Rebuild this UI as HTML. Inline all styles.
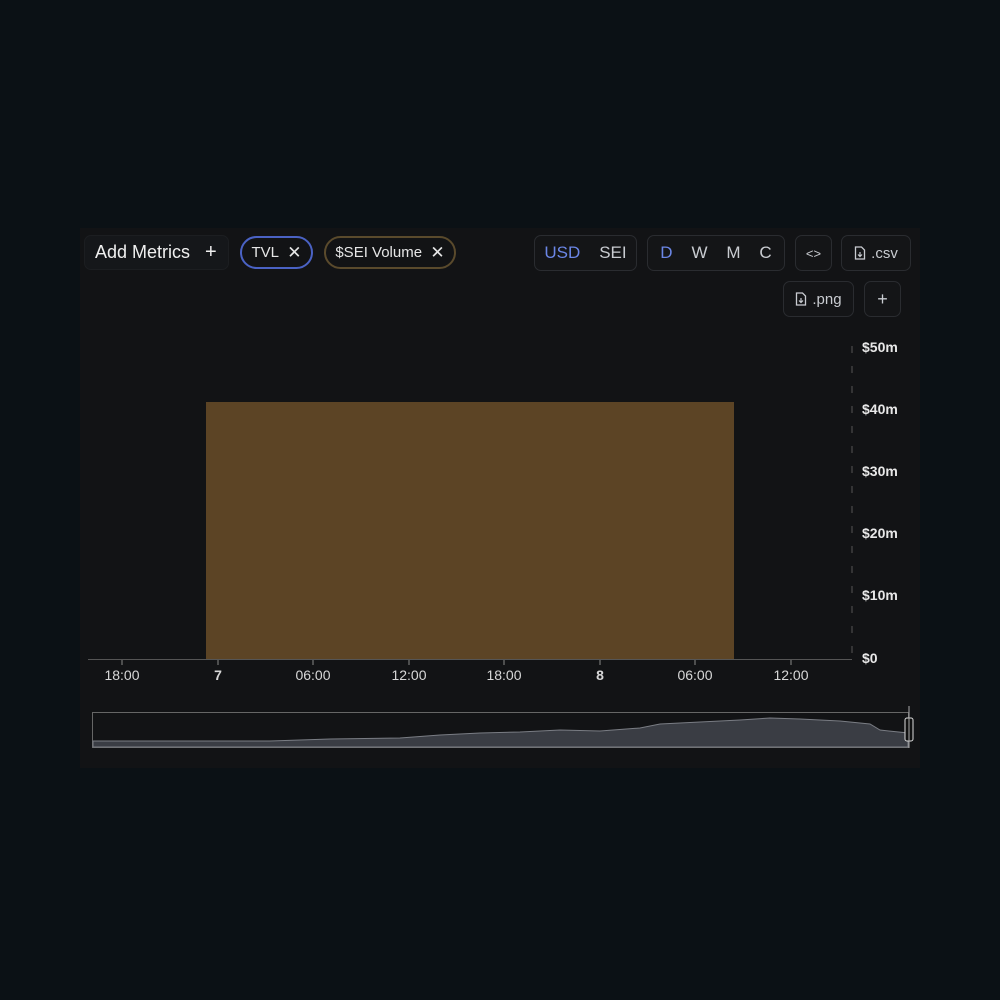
<!DOCTYPE html>
<html><head><style>
body{margin:0;width:1000px;height:1000px;background:#0b1115;position:relative;font-family:"Liberation Sans",sans-serif;overflow:hidden}
.panel{position:absolute;left:80px;top:228px;width:840px;height:540px;background:#121315}
.btn{position:absolute;border:1px solid #2a2c30;border-radius:7px;color:#c9ccd1;font-size:15px;display:flex;align-items:center;justify-content:center;box-sizing:border-box;background:#141517}
.pill{position:absolute;border-radius:17px;color:#e6e6e6;font-size:15px;display:flex;align-items:center;justify-content:center;box-sizing:border-box}
.yl{position:absolute;left:862px;color:#e8e8e8;font-size:14px;font-weight:bold}
.xl{position:absolute;top:667px;color:#d8d8d8;font-size:14px;width:60px;text-align:center}
</style></head><body>
<div class="panel"></div>
<div class="btn" style="left:84px;top:235px;width:145px;height:35px;font-size:18px;color:#f0f0f0;border-color:#1c1e21;background:#15171a;justify-content:flex-start;padding-left:10px">Add Metrics&nbsp;&nbsp;&nbsp;<span style="font-size:20px;font-weight:300">+</span></div>
<div class="pill" style="left:240px;top:236px;width:73px;height:33px;border:2px solid #4a62c4">TVL&nbsp;&nbsp;<span style="font-size:17px">✕</span></div>
<div class="pill" style="left:324px;top:236px;width:132px;height:33px;border:2px solid #5a4a2c">$SEI Volume&nbsp;&nbsp;<span style="font-size:17px">✕</span></div>
<div class="btn" style="left:534px;top:235px;width:103px;height:36px;font-size:17px"><span style="color:#6b86e6">USD</span>&nbsp;&nbsp;&nbsp;&nbsp;<span>SEI</span></div>
<div class="btn" style="left:647px;top:235px;width:138px;height:36px;font-size:17px;word-spacing:0"><span style="color:#6b86e6">D</span>&nbsp;&nbsp;&nbsp;&nbsp;W&nbsp;&nbsp;&nbsp;&nbsp;M&nbsp;&nbsp;&nbsp;&nbsp;C</div>
<div class="btn" style="left:795px;top:235px;width:37px;height:36px;font-size:13px">&lt;&gt;</div>
<div class="btn" style="left:841px;top:235px;width:70px;height:36px"><svg width="12" height="14" viewBox="0 0 12 14" style="margin-right:5px"><path d="M1.5 1h6l3 3v9h-9z" fill="none" stroke="#c9ccd1" stroke-width="1.3"/><path d="M6 6v4M4 8.5l2 2 2-2" fill="none" stroke="#c9ccd1" stroke-width="1.2"/></svg>.csv</div>
<div class="btn" style="left:783px;top:281px;width:71px;height:36px"><svg width="12" height="14" viewBox="0 0 12 14" style="margin-right:5px"><path d="M1.5 1h6l3 3v9h-9z" fill="none" stroke="#c9ccd1" stroke-width="1.3"/><path d="M6 6v4M4 8.5l2 2 2-2" fill="none" stroke="#c9ccd1" stroke-width="1.2"/></svg>.png</div>
<div class="btn" style="left:864px;top:281px;width:37px;height:36px;font-size:18px">+</div>
<svg style="position:absolute;left:0;top:0" width="1000" height="1000">
<rect x="206" y="402" width="528" height="257" fill="#5c4425"/>
<line x1="852" y1="346" x2="852" y2="657" stroke="#555" stroke-dasharray="7,13"/>
<line x1="88" y1="659.5" x2="852" y2="659.5" stroke="#555"/>
<g stroke="#888">
<line x1="122" y1="660" x2="122" y2="665"/><line x1="218" y1="660" x2="218" y2="665"/><line x1="313" y1="660" x2="313" y2="665"/><line x1="409" y1="660" x2="409" y2="665"/><line x1="504" y1="660" x2="504" y2="665"/><line x1="600" y1="660" x2="600" y2="665"/><line x1="695" y1="660" x2="695" y2="665"/><line x1="791" y1="660" x2="791" y2="665"/>
</g>
<rect x="92.5" y="712.5" width="816" height="35" fill="none" stroke="#666"/>
<path d="M93 741 L270 741 L330 739 L400 738 L440 735 L480 733 L520 732 L560 730 L600 731 L640 728 L660 724 L700 722 L740 720 L770 718 L800 719 L840 721 L870 724 L880 730 L908 733 L908 747 L93 747Z" fill="#3a3d44" stroke="#7a7d84" stroke-width="1"/>
<rect x="905" y="718" width="8" height="23" rx="2" fill="#111" stroke="#ddd"/>
<line x1="909" y1="706" x2="909" y2="748" stroke="#aaa"/>
</svg>
<div class="yl" style="top:339px">$50m</div>
<div class="yl" style="top:401px">$40m</div>
<div class="yl" style="top:463px">$30m</div>
<div class="yl" style="top:525px">$20m</div>
<div class="yl" style="top:587px">$10m</div>
<div class="yl" style="top:650px">$0</div>
<div class="xl" style="left:92px">18:00</div>
<div class="xl" style="left:188px;font-weight:bold">7</div>
<div class="xl" style="left:283px">06:00</div>
<div class="xl" style="left:379px">12:00</div>
<div class="xl" style="left:474px">18:00</div>
<div class="xl" style="left:570px;font-weight:bold">8</div>
<div class="xl" style="left:665px">06:00</div>
<div class="xl" style="left:761px">12:00</div>
</body></html>
